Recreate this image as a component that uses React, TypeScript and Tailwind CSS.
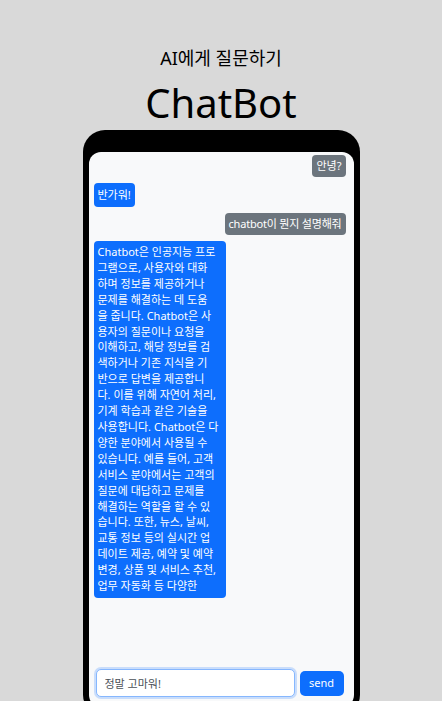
import React, { useState } from "react";

const answerLines = [
  "Chatbot은 인공지능 프로",
  "그램으로, 사용자와 대화",
  "하며 정보를 제공하거나",
  "문제를 해결하는 데 도움",
  "을 줍니다. Chatbot은 사",
  "용자의 질문이나 요청을",
  "이해하고, 해당 정보를 검",
  "색하거나 기존 지식을 기",
  "반으로 답변을 제공합니",
  "다. 이를 위해 자연어 처리,",
  "기계 학습과 같은 기술을",
  "사용합니다. Chatbot은 다",
  "양한 분야에서 사용될 수",
  "있습니다. 예를 들어, 고객",
  "서비스 분야에서는 고객의",
  "질문에 대답하고 문제를",
  "해결하는 역할을 할 수 있",
  "습니다. 또한, 뉴스, 날씨,",
  "교통 정보 등의 실시간 업",
  "데이트 제공, 예약 및 예약",
  "변경, 상품 및 서비스 추천,",
  "업무 자동화 등 다양한",
];

const font = { fontFamily: '"Noto Sans", "Noto Sans CJK KR", sans-serif' };

const App = () => {
  const [input, setInput] = useState("정말 고마워!");

  return (
    <div
      className="min-h-screen bg-[#d9d9d9] flex flex-col items-center overflow-hidden"
      style={font}
    >
      <h3 className="mt-[46px] text-[18px] leading-[24px] text-black">
        AI에게 질문하기
      </h3>
      <h1 className="mt-[8px] text-[40px] leading-[50px] text-black">
        ChatBot
      </h1>

      {/* phone frame */}
      <div className="mt-[2px] w-[277px] bg-black rounded-[22px] pt-[22px] px-[6px] pb-[10px]">
        <div className="bg-[#f8f9fa] rounded-[12px] h-[555px] flex flex-col">
          <div className="flex-1 flex flex-col gap-[6px] pt-[3px] pl-[5px] pr-[8px] text-white">
            <div className="self-end bg-[#6c757d] rounded-[4px] px-[4px] text-[11px] leading-[22px]">
              안녕?
            </div>
            <div className="self-start bg-[#0d6efd] rounded-[4px] px-[4px] text-[11px] leading-[24px]">
              반가워!
            </div>
            <div className="self-end bg-[#6c757d] rounded-[4px] px-[4px] text-[11px] leading-[22px] tracking-[-0.2px]">
              chatbot이 뭔지 설명해줘
            </div>
            <div className="self-start w-[132px] bg-[#0d6efd] rounded-[4px] px-[4px] pt-[3px] pb-[4px] text-[11px] leading-[15.9px]">
              {answerLines.map((line, i) => (
                <div key={i} className="whitespace-nowrap">
                  {line}
                </div>
              ))}
            </div>
          </div>

          <div className="flex items-center gap-[5px] pl-[7px] pr-[10px] pb-[10px]">
            <input
              autoFocus
              value={input}
              onChange={(e) => setInput(e.target.value)}
              className="w-[199px] h-[28px] px-[8px] text-[11px] text-[#495057] bg-white border border-[#86b7fe] rounded-[5px] outline-none shadow-[0_0_0_2px_rgba(13,110,253,0.2)]"
            />
            <button className="w-[44px] h-[25px] bg-[#0d6efd] text-white text-[11px] rounded-[5px]">
              send
            </button>
          </div>
        </div>
      </div>
    </div>
  );
};

export default App;
